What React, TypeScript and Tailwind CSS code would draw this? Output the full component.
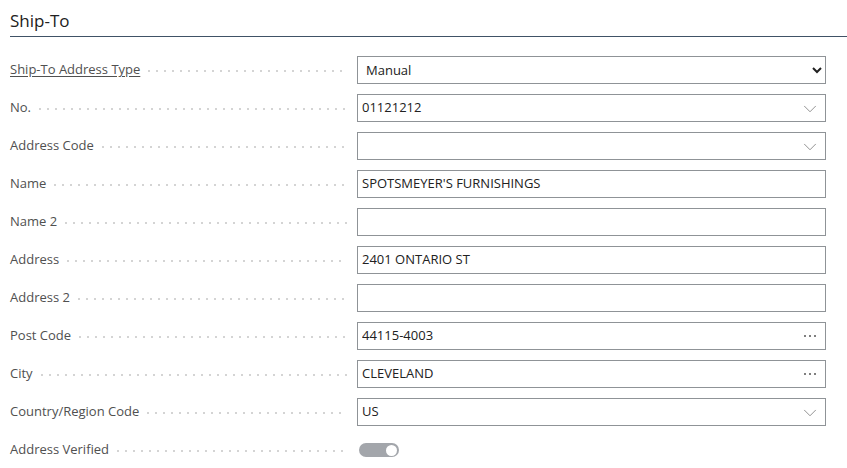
import { ChevronDown } from 'lucide-react';

type Field = {
  label: string;
  value?: string;
  kind: 'select' | 'lookup' | 'text' | 'assist' | 'toggle';
  link?: boolean;
};

const fields: Field[] = [
  { label: 'Ship-To Address Type', value: 'Manual', kind: 'select', link: true },
  { label: 'No.', value: '01121212', kind: 'lookup' },
  { label: 'Address Code', value: '', kind: 'lookup' },
  { label: 'Name', value: "SPOTSMEYER'S FURNISHINGS", kind: 'text' },
  { label: 'Name 2', value: '', kind: 'text' },
  { label: 'Address', value: '2401 ONTARIO ST', kind: 'text' },
  { label: 'Address 2', value: '', kind: 'text' },
  { label: 'Post Code', value: '44115-4003', kind: 'assist' },
  { label: 'City', value: 'CLEVELAND', kind: 'assist' },
  { label: 'Country/Region Code', value: 'US', kind: 'lookup' },
  { label: 'Address Verified', kind: 'toggle' },
];

function Control({ field }: { field: Field }) {
  if (field.kind === 'toggle') {
    return (
      <div className="w-[469px] h-7 flex items-center pl-[2px]">
        <div className="w-[40px] h-[14px] rounded-full bg-[#a3a6ab] flex items-center justify-end pr-[2px]">
          <div className="w-[11px] h-[11px] rounded-full bg-white" />
        </div>
      </div>
    );
  }
  if (field.kind === 'select') {
    return (
      <select
        defaultValue={field.value}
        className="w-[469px] h-7 border border-[#8f9397] bg-white pl-[4px] pr-2 text-[13px] text-[#212121]"
      >
        <option>Manual</option>
        <option>Location</option>
        <option>Custom Address</option>
      </select>
    );
  }
  return (
    <div className="w-[469px] h-7 border border-[#8f9397] bg-white flex items-center pl-[4px] pr-[4px] text-[13px] text-[#212121]">
      <span className="flex-1 truncate">{field.value}</span>
      {field.kind === 'lookup' && (
        <ChevronDown size={22} strokeWidth={0.8} className="text-[#6b6b6b] mt-[1px]" />
      )}
      {field.kind === 'assist' && (
        <span className="flex gap-[3px] items-center pr-[5px]">
          <span className="w-[2px] h-[2px] rounded-full bg-[#555]" />
          <span className="w-[2px] h-[2px] rounded-full bg-[#555]" />
          <span className="w-[2px] h-[2px] rounded-full bg-[#555]" />
        </span>
      )}
    </div>
  );
}

export default function App() {
  return (
    <div className="w-[847px] h-[468px] bg-white font-['Segoe_UI','Open_Sans',sans-serif] overflow-hidden">
      <div className="pl-[10px]">
        <div className="h-[37px] border-b border-[#405266] flex items-end pb-[4px]">
          <h2 className="text-[17px] leading-[22px] text-[#212121] font-medium">Ship-To</h2>
        </div>
        <div className="mt-[14px] flex flex-col pr-[21px]">
          {fields.map((f) => (
            <div key={f.label} className="h-[38px] flex items-center">
              <div className="w-[347px] flex items-center pr-[10px]">
                <span
                  className={`text-[13px] text-[#505050] whitespace-nowrap ${
                    f.link ? 'underline underline-offset-2 text-[#3a4a5c]' : ''
                  }`}
                >
                  {f.label}
                </span>
                <div className="flex-1 ml-[8px] mt-[2px] h-[2px] bg-[linear-gradient(to_right,#d4d4d4_2px,transparent_2px)] bg-[length:8px_2px] bg-repeat-x" />
              </div>
              <Control field={f} />
            </div>
          ))}
        </div>
      </div>
    </div>
  );
}
